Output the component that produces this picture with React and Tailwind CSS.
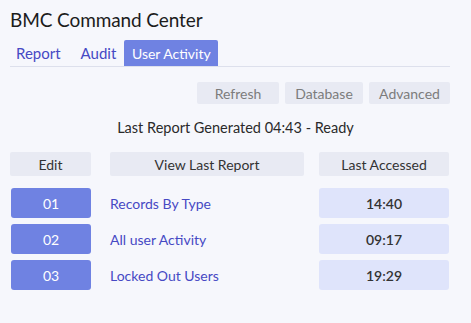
export default function App() {
  const rows = [
    { id: "01", name: "Records By Type", time: "14:40" },
    { id: "02", name: "All user Activity", time: "09:17" },
    { id: "03", name: "Locked Out Users", time: "19:29" },
  ];

  return (
    <div
      className="w-[471px] h-[323px] bg-[#f6f7fc] pl-[10px] pr-[21px] pt-[6px] text-[#222]"
      style={{ fontFamily: "Lato, 'Open Sans', sans-serif" }}
    >
      {/* Title */}
      <h1 className="text-[19px] leading-[28px] text-[#1c1c1c] tracking-[-0.1px]">BMC Command Center</h1>

      {/* Tabs */}
      <div className="mt-[6px] flex items-end h-[27px] border-b border-[#dde0ec]">
        <button className="h-[26px] px-[6px] text-[15px] text-[#4649c4]">Report</button>
        <button className="ml-[8px] h-[26px] px-[6px] text-[15px] text-[#4649c4]">Audit</button>
        <button className="ml-[2px] w-[94px] h-[26px] text-[14px] text-white bg-[#6f82e2] rounded-t-[2px]">
          User Activity
        </button>
      </div>

      {/* Action buttons */}
      <div className="mt-[15px] flex justify-end gap-[6px]">
        <button className="w-[82px] h-[22px] bg-[#e8eaf3] text-[14px] text-[#7c7c7c] rounded-[2px]">Refresh</button>
        <button className="w-[78px] h-[22px] bg-[#e8eaf3] text-[14px] text-[#7c7c7c] rounded-[2px]">Database</button>
        <button className="w-[81px] h-[22px] bg-[#e8eaf3] text-[14px] text-[#7c7c7c] rounded-[2px]">Advanced</button>
      </div>

      {/* Status */}
      <p className="mt-[15px] pl-[11px] text-center text-[14.5px] leading-[18px] text-[#2a2a2a]">
        Last Report Generated 04:43 - Ready
      </p>

      {/* Table header */}
      <div className="mt-[15px] flex text-[14px] text-[#333]">
        <div className="w-[81px] h-[24px] flex items-center justify-center bg-[#e8eaf3] rounded-[2px]">Edit</div>
        <div className="ml-[19px] w-[194px] h-[24px] flex items-center justify-center bg-[#e8eaf3] rounded-[2px]">View Last Report</div>
        <div className="ml-[15px] w-[130px] h-[24px] flex items-center justify-center bg-[#e8eaf3] rounded-[2px]">Last Accessed</div>
      </div>

      {/* Rows */}
      <div className="mt-[12px] flex flex-col gap-[6px] text-[14px]">
        {rows.map((r) => (
          <div key={r.id} className="flex h-[30px]">
            <button className="ml-[1px] w-[80px] bg-[#6f82e2] text-white rounded-[3px]">{r.id}</button>
            <a className="ml-[19px] w-[194px] flex items-center text-[#4649c4]">{r.name}</a>
            <div className="ml-[15px] w-[130px] flex items-center justify-center bg-[#dfe4fb] font-semibold text-[#333] rounded-[3px]">
              {r.time}
            </div>
          </div>
        ))}
      </div>
    </div>
  );
}
